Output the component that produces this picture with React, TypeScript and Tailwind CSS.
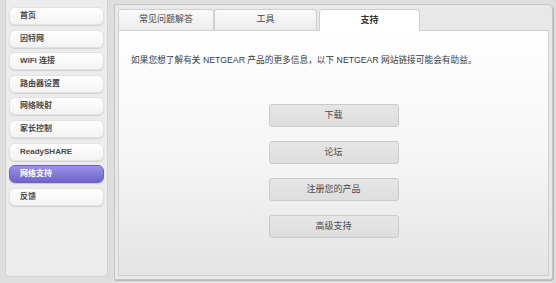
const navItems = [
  "首页",
  "因特网",
  "WiFi 连接",
  "路由器设置",
  "网络映射",
  "家长控制",
  "ReadySHARE",
  "网络支持",
  "反馈",
];

const tabs = [
  { label: "常见问题解答", w: "w-[96px]" },
  { label: "工具", w: "w-[103px]" },
];

const links = ["下载", "论坛", "注册您的产品", "高级支持"];

export default function App() {
  return (
    <div
      className="flex h-[283px] w-[556px] gap-[6px] bg-[#dedede] pl-[5px] pr-[3px] pb-[3px] text-[#444]"
      style={{ fontFamily: '"Liberation Sans", "Noto Sans CJK SC", sans-serif' }}
    >
      {/* left menu */}
      <div className="mb-[3px] flex w-[103px] flex-col gap-[4.6px] rounded-b-[4px] border border-t-0 border-[#d2d2d2] bg-[#ececec] px-[3px] pt-[7px]">
        {navItems.map((item) => {
          const active = item === "网络支持";
          return (
            <div
              key={item}
              className={
                active
                  ? "flex h-[18px] items-center rounded-[6px] border border-[#6d62c4] bg-gradient-to-b from-[#9c92e6] to-[#6f64cc] pl-[10px] text-[8px] font-bold text-white shadow-[0_1px_1px_rgba(0,0,0,0.15)]"
                  : "flex h-[18px] items-center rounded-[6px] border border-[#e2e2e2] bg-gradient-to-b from-white to-[#f3f3f3] pl-[10px] text-[8px] font-bold text-[#4a4a4a] shadow-[0_1px_1px_rgba(0,0,0,0.12)]"
              }
            >
              {item}
            </div>
          );
        })}
      </div>

      {/* main panel */}
      <div className="mt-[4px] flex flex-1 flex-col rounded-tr-[5px] rounded-br-[3px] border border-[#c4c4c4] bg-[#e8e8e8] px-[3px] pt-[4px] pb-[3px] shadow-[1px_1px_0_#b8b8b8]">
        <div className="flex h-[21px]">
          {tabs.map((tab) => (
            <div
              key={tab.label}
              className={`flex ${tab.w} items-center justify-center rounded-t-[3px] border border-b-0 border-[#cfcfcf] bg-gradient-to-b from-[#fafafa] to-[#ececec] text-[9px] text-[#444]`}
            >
              {tab.label}
            </div>
          ))}
          <div className="z-10 ml-[2px] -mb-px flex w-[101px] items-center justify-center rounded-t-[4px] border border-b-0 border-[#cfcfcf] bg-white text-[9px] font-bold text-[#333]">
            支持
          </div>
        </div>
        <div className="flex flex-1 flex-col items-center border border-[#cfcfcf] bg-gradient-to-b from-white via-[#f6f6f6] to-[#e4e4e4]">
          <p className="mt-[23px] self-start pl-[12px] text-[8.7px] text-[#3a3a3a]">
            如果您想了解有关 NETGEAR 产品的更多信息，以下 NETGEAR 网站链接可能会有助益。
          </p>
          <div className="mt-[37px] flex flex-col gap-[14px]">
            {links.map((link) => (
              <div
                key={link}
                className="flex h-[23px] w-[130px] items-center justify-center rounded-[3px] border border-[#cacaca] bg-gradient-to-b from-[#e6e6e6] to-[#dedede] text-[9px] text-[#4a4a4a]"
              >
                {link}
              </div>
            ))}
          </div>
        </div>
      </div>
    </div>
  );
}
